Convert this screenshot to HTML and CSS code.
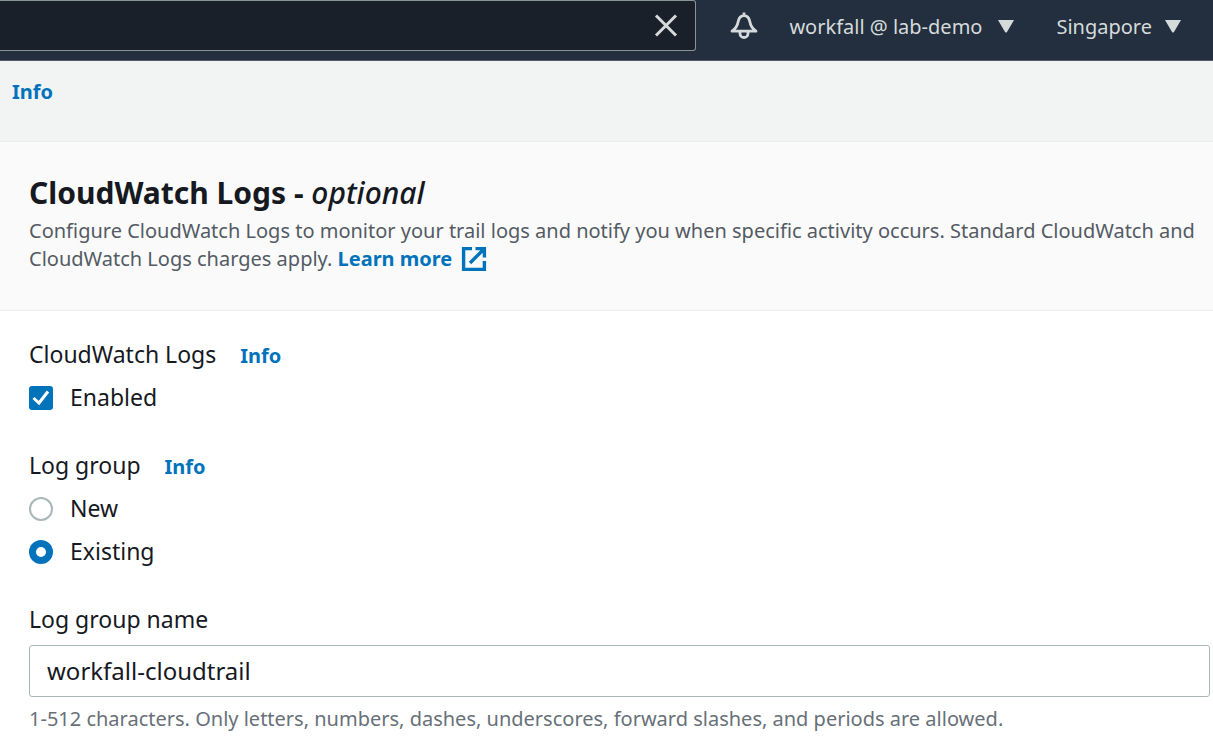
FILE: index.html
```html
<!DOCTYPE html>
<html lang="en">
<head>
<meta charset="utf-8">
<title>CloudWatch Logs</title>
<link rel="stylesheet" href="styles.css">
</head>
<body>
<header class="topbar">
  <div class="search">
    <input class="search-input" type="text" aria-label="Search">
    <button class="icon-button" type="button" aria-label="Clear search">
      <svg width="24" height="24" viewBox="0 0 24 24" fill="none" stroke="currentColor" stroke-width="3"><path d="M2 1.500L22 21.500M22 1.500L2 21.500"/></svg>
    </button>
  </div>
  <nav class="topnav">
    <button class="icon-button" type="button" aria-label="Notifications">
      <svg width="28" height="28" viewBox="0 0 28 28" fill="none" stroke="currentColor" stroke-width="2.8" stroke-linejoin="round"><path d="M14 .5V3.500M2 19.200C6 16.500 7.500 13.500 8.200 9.500C9 5.500 11 3.700 14 3.700S19 5.500 19.800 9.500C20.500 13.500 22 16.500 26 19.200Z"/><path d="M10 19.500V21.500a4 4 0 0 0 8 0V19.500"/></svg>
    </button>
    <button class="menu-button account" type="button">workfall @ lab-demo <svg width="16" height="13" viewBox="0 0 16 13"><path d="M0 0H16L9 12Q8 13 7 12Z" fill="currentColor"/></svg></button>
    <button class="menu-button" type="button">Singapore <svg width="16" height="13" viewBox="0 0 16 13"><path d="M0 0H16L9 12Q8 13 7 12Z" fill="currentColor"/></svg></button>
  </nav>
</header>
<div class="info-strip"><a class="link" href="#">Info</a></div>
<main>
  <section class="panel-header">
    <h1 class="title">CloudWatch Logs - <em class="optional">optional</em></h1>
    <p class="description">Configure CloudWatch Logs to monitor your trail logs and notify you when specific activity occurs. Standard CloudWatch and CloudWatch Logs charges apply. <a class="link" href="#">Learn more <svg class="external" width="26" height="26" viewBox="0 0 26 26" fill="none" stroke="currentColor" stroke-width="3.4"><path d="M11 2.600H2.600V23.400H23.400V15M14.500 2.600H23.400V11.500M23 3L9 17"/></svg></a></p>
  </section>
  <form class="form">
    <fieldset class="group">
      <legend class="legend">CloudWatch Logs <a class="link info" href="#">Info</a></legend>
      <label class="choice"><input class="checkbox" type="checkbox" checked><svg class="tick" width="24" height="24" viewBox="0 0 24 24" fill="none" stroke="#fff" stroke-width="3"><path d="M4.500 12L10 17L19 5.500"/></svg>Enabled</label>
    </fieldset>
    <fieldset class="group">
      <legend class="legend">Log group <a class="link info" href="#">Info</a></legend>
      <label class="choice"><input class="radio" type="radio" name="log-group">New</label>
      <label class="choice"><input class="radio" type="radio" name="log-group" checked>Existing</label>
    </fieldset>
    <div class="field">
      <label for="group-name">Log group name</label>
      <input class="text-input" id="group-name" type="text" value="workfall-cloudtrail">
      <p class="hint">1-512 characters. Only letters, numbers, dashes, underscores, forward slashes, and periods are allowed.</p>
    </div>
  </form>
</main>
</body>
</html>
```
FILE: styles.css
```css
* { box-sizing: border-box; }
body {
  margin: 0;
  font-family: "Noto Sans", sans-serif;
  font-size: 23px;
  line-height: 33px;
  color: #16191f;
  background: #fff;
}
button, input { font: inherit; color: inherit; }
.topbar {
  display: flex;
  height: 61px;
  padding-bottom: 9px;
  align-items: stretch;
  background: #232f3e;
  border-bottom: 1px solid #545b64;
  color: #d5dbdb;
}
.search {
  flex: 1;
  display: flex;
  align-items: center;
  padding-right: 17px;
  background: #1a2029;
  border: 1px solid #879596;
  border-left: 0;
  border-radius: 0 3px 3px 0;
}
.search-input {
  flex: 1;
  min-width: 0;
  border: 0;
  outline: 0;
  background: transparent;
}
.icon-button {
  display: flex;
  padding: 0;
  border: 0;
  background: none;
}
.topnav {
  display: flex;
  align-items: center;
  padding: 0 32px 0 34px;
}
.menu-button {
  display: flex;
  align-items: center;
  gap: 13px;
  padding: 2px 0 0;
  border: 0;
  background: none;
  font-size: 20px;
  line-height: 28px;
}
.account { gap: 16px; margin: 0 42px 0 31px; }
.info-strip {
  height: 81px;
  padding: 17px 12px;
  font-size: 20px;
  line-height: 28px;
  background: #f2f3f3;
  border-bottom: 1px solid #eaeded;
}
.link {
  color: #0073bb;
  font-size: 20px;
  font-weight: 700;
  text-decoration: none;
}
.panel-header {
  padding: 31px 12px 37px 29px;
  background: #fafafa;
  border-bottom: 1px solid #eaeded;
}
.title {
  margin: 0 0 4px;
  font-size: 30px;
  line-height: 40px;
  font-weight: 700;
}
.optional { font-weight: 500; }
.description {
  margin: 0;
  font-size: 20px;
  line-height: 28px;
  color: #545b64;
}
.external {
  margin: -8px 0 -4px 4px;
  vertical-align: middle;
}
.form { padding: 27px 3px 8px 29px; }
.group {
  min-width: 0;
  margin: 0 0 35px;
  padding: 0;
  border: 0;
}
.legend { padding: 0; }
.info { margin-left: 18px; line-height: 20px; }
.choice {
  position: relative;
  display: flex;
  align-items: center;
  gap: 17px;
  margin-top: 10px;
}
.checkbox, .radio {
  appearance: none;
  width: 24px;
  height: 24px;
  margin: 0;
  border: 2px solid #aab7b8;
  border-radius: 50%;
  background: #fff;
}
.checkbox { border-radius: 3px; }
.checkbox:checked { border-color: #0073bb; background: #0073bb; }
.radio:checked { border: 7px solid #0073bb; }
.tick { position: absolute; left: 0; pointer-events: none; }
.field { display: flex; flex-direction: column; }
.text-input {
  width: 100%;
  height: 52px;
  margin-top: 9px;
  padding: 0 17px 2px;
  border: 1px solid #aab7b8;
  border-radius: 3px;
  background: #fff;
  font-size: 24px;
}
.hint {
  margin: 8px 0 0;
  font-size: 20px;
  line-height: 28px;
  color: #687078;
}
```
